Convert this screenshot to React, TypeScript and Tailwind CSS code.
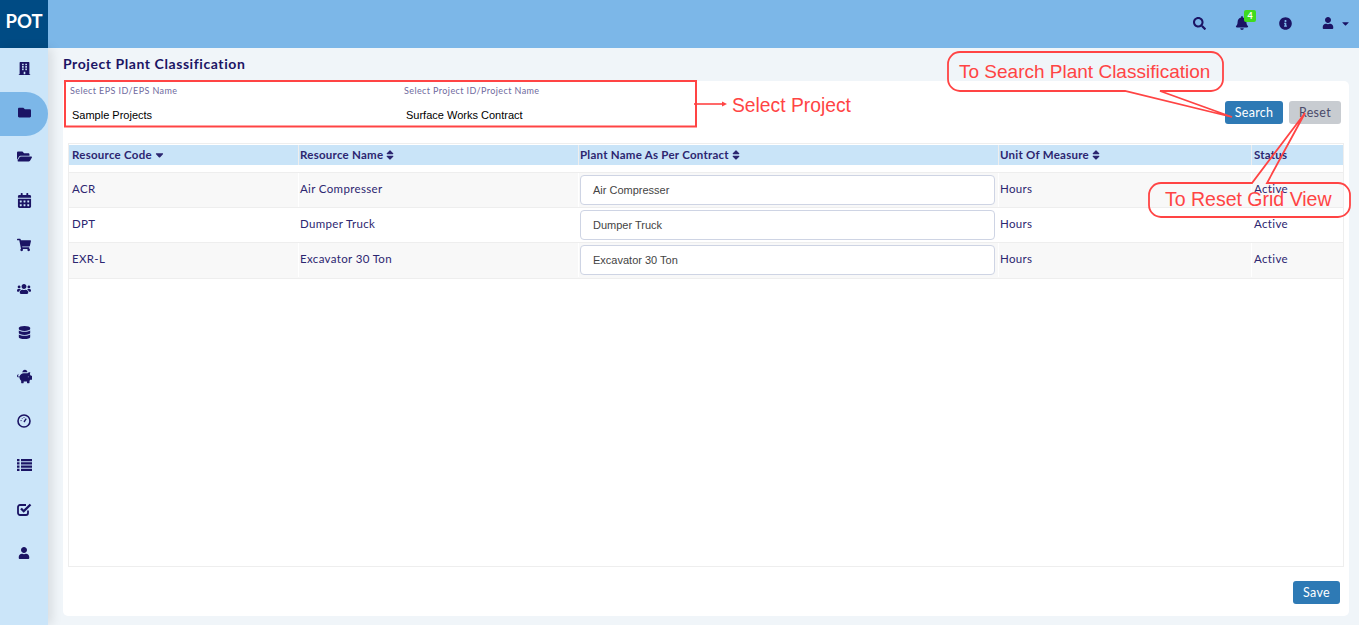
import {
  FaBell,
  FaBuilding,
  FaCalendarAlt,
  FaCaretDown,
  FaDatabase,
  FaFolder,
  FaFolderOpen,
  FaInfoCircle,
  FaPiggyBank,
  FaSearch,
  FaShoppingCart,
  FaSort,
  FaSortDown,
  FaUser,
  FaUsers,
} from "react-icons/fa";
import type { ComponentType } from "react";

const NAVY = "text-[#1b1464]";

type IconProps = { size?: number };

function GaugeIcon() {
  return (
    <svg width="14" height="14" viewBox="0 0 14 14" fill="none" stroke="currentColor">
      <circle cx="7" cy="7" r="6" strokeWidth="1.6" />
      <path d="M7 8 9.2 4.6" strokeWidth="1.4" />
      <path d="M3.6 6.6h1M5 4.2l.5.6M7 3.2v.8" strokeWidth="1" />
    </svg>
  );
}

function ListIcon() {
  return (
    <svg width="15" height="12" viewBox="0 0 15 12" fill="currentColor">
      <path d="M0 0h2.5v2.2H0zM4 0h11v2.2H4zM0 3.3h2.5v2.2H0zM4 3.3h11v2.2H4zM0 6.6h2.5v2.2H0zM4 6.6h11v2.2H4zM0 9.8h2.5V12H0zM4 9.8h11V12H4z" />
    </svg>
  );
}

function CheckSquareIcon() {
  return (
    <svg width="15" height="14" viewBox="0 0 15 14" fill="none" stroke="currentColor">
      <path d="M11 8.5V11a2 2 0 0 1-2 2H3a2 2 0 0 1-2-2V5a2 2 0 0 1 2-2h6" strokeWidth="1.8" />
      <path d="M4 6.5 6.7 9.2 13.5 2.5" strokeWidth="2.3" />
    </svg>
  );
}

const navItems: { icon: ComponentType<IconProps>; size: number; active?: boolean }[] = [
  { icon: FaBuilding, size: 13 },
  { icon: FaFolder, size: 13, active: true },
  { icon: FaFolderOpen, size: 15 },
  { icon: FaCalendarAlt, size: 15 },
  { icon: FaShoppingCart, size: 14 },
  { icon: FaUsers, size: 14 },
  { icon: FaDatabase, size: 13 },
  { icon: FaPiggyBank, size: 15 },
  { icon: GaugeIcon, size: 14 },
  { icon: ListIcon, size: 14 },
  { icon: CheckSquareIcon, size: 15 },
  { icon: FaUser, size: 12 },
];

const rows = [
  { code: "ACR", name: "Air Compresser", bg: "bg-[#f8f8f8]", h: "h-[35px]" },
  { code: "DPT", name: "Dumper Truck", bg: "bg-white", h: "h-[35px]" },
  { code: "EXR-L", name: "Excavator 30 Ton", bg: "bg-[#f8f8f8]", h: "h-[36px] pb-[1px]" },
];

function Sidebar() {
  return (
    <aside className="w-[48px] shrink-0 bg-[#cbe5f9] shadow-[4px_0_10px_rgba(0,0,0,0.1)] z-10">
      {navItems.map(({ icon: Icon, size, active }, i) => (
        <div
          key={i}
          className={`h-[44px] pb-[3px] flex items-center justify-center ${NAVY} ${
            active ? "bg-[#7cb7e8] rounded-r-[22px]" : ""
          }`}
        >
          <Icon size={size} />
        </div>
      ))}
    </aside>
  );
}

function Header() {
  return (
    <header className="h-[48px] flex items-center bg-[#7cb7e8]">
      <div className="w-[48px] h-full pb-[4px] bg-[#004b84] flex items-center justify-center text-white font-bold text-[18.5px] font-['Lato',sans-serif]">
        POT
      </div>
      <div className={`ml-auto pb-[2px] flex items-center ${NAVY}`}>
        <FaSearch size={13} className="mr-[29px]" />
        <div className="relative mr-[30px]">
          <FaBell size={14} />
          <span className="absolute -top-[6px] left-[9px] w-[12px] h-[12px] rounded-[2px] bg-[#3fdc1e] text-white text-[9px] leading-[12px] font-bold text-center">
            4
          </span>
        </div>
        <FaInfoCircle size={13} className="mr-[30px]" />
        <FaUser size={12} className="mr-[6px]" />
        <FaCaretDown size={11} className="mr-[8px]" />
      </div>
    </header>
  );
}

function SortLabel({ label, down }: { label: string; down?: boolean }) {
  return (
    <span className="flex items-center gap-[1px]">
      {label}
      {down ? <FaSortDown size={13} className="-mt-[5px]" /> : <FaSort size={12} />}
    </span>
  );
}

function PlantTable() {
  return (
    <div className="mt-[15px] mx-[5px] h-[424px] border border-[#eeeeee] text-[11.5px] text-[#2c2670]">
      <div className="mt-[1px] h-[20px] flex gap-[1px] font-bold tracking-[0.25px] bg-[#eeeeee]">
        <div className="w-[229px] bg-[#c9e4f8] flex items-center pl-[3px]"><SortLabel label="Resource Code" down /></div>
        <div className="w-[279px] bg-[#c9e4f8] flex items-center pl-[1px]"><SortLabel label="Resource Name" /></div>
        <div className="w-[419px] bg-[#c9e4f8] flex items-center pl-[1px]"><SortLabel label="Plant Name As Per Contract" /></div>
        <div className="w-[252px] bg-[#c9e4f8] flex items-center pl-[1px]"><SortLabel label="Unit Of Measure" /></div>
        <div className="w-[91px] bg-[#c9e4f8] flex items-center pl-[2px]">Status</div>
      </div>
      <div className="mt-[7px] border-t border-[#eeeeee] tracking-[0.35px]">
        {rows.map((row) => (
          <div key={row.code} className={`flex border-b border-[#eeeeee] ${row.bg} ${row.h}`}>
            <div className="w-[230px] pl-[3px] pb-[2px] flex items-center border-r border-white">{row.code}</div>
            <div className="w-[280px] pl-[1px] pb-[2px] flex items-center border-r border-white">{row.name}</div>
            <div className="w-[420px] pl-[1px] flex items-center border-r border-white">
              <div className="w-[415px] h-[30px] flex items-center pl-[12px] pt-[1px] bg-white border border-[#ced4e4] rounded-[4px] text-[#444444] tracking-normal font-['Liberation_Sans',sans-serif] text-[11px]">
                {row.name}
              </div>
            </div>
            <div className="w-[253px] pl-[1px] pb-[2px] flex items-center border-r border-white">Hours</div>
            <div className="pl-[2px] pb-[2px] flex items-center">Active</div>
          </div>
        ))}
      </div>
    </div>
  );
}

function Annotations() {
  return (
    <div className="absolute inset-0 pointer-events-none text-[#ff4444] font-['Liberation_Sans',sans-serif]">
      <svg width="1359" height="625" className="absolute inset-0" fill="none" stroke="#ff4444">
        <rect x="65" y="81" width="631" height="45.5" strokeWidth="2" />
        <path d="M694 104h28" strokeWidth="1.6" />
        <path d="M722 101.5l5 2.5-5 2.5z" fill="#ff4444" stroke="none" />
        <path
          d="M960 52h251a12 12 0 0 1 12 12v15a12 12 0 0 1-12 12h-51l72 26-107-26H960a12 12 0 0 1-12-12V64a12 12 0 0 1 12-12z"
          strokeWidth="1.8"
        />
        <path
          d="M1161 183h91l53-70-38 70h71a12 12 0 0 1 12 12v10a12 12 0 0 1-12 12h-177a12 12 0 0 1-12-12v-10a12 12 0 0 1 12-12z"
          strokeWidth="1.8"
        />
      </svg>
      <span className="absolute left-[732px] top-[94px] text-[19.3px] leading-[23px]">Select Project</span>
      <span className="absolute left-[959px] top-[60px] text-[19px] leading-[23px]">To Search Plant Classification</span>
      <span className="absolute left-[1165px] top-[188px] text-[19.5px] leading-[23px]">To Reset Grid View</span>
    </div>
  );
}

export default function App() {
  return (
    <div className="relative w-[1359px] h-[625px] overflow-hidden flex flex-col bg-[#f0f5f9] font-['Lato',sans-serif]">
      <Header />
      <div className="flex flex-1 min-h-0">
        <Sidebar />
        <main className="flex-1 min-w-0 pl-[15px] pr-[10px] pt-[7px]">
          <h1 className={`text-[14px] leading-[17px] font-bold tracking-[0.57px] ${NAVY}`}>Project Plant Classification</h1>
          <section className="mt-[9px] h-[535px] bg-white rounded-[5px] flex flex-col">
            <div className="h-[47px] flex">
              <div className="w-[334px] pl-[7px] pt-[4px]">
                <div className="text-[9px] leading-[11px] tracking-[0.4px] text-[#6f6a9e]">Select EPS ID/EPS Name</div>
                <div className="mt-[12px] pl-[2px] text-[11px] leading-[14px] text-black font-['Liberation_Sans',sans-serif]">Sample Projects</div>
              </div>
              <div className="w-[300px] pl-[7px] pt-[4px]">
                <div className="text-[9px] leading-[11px] tracking-[0.4px] text-[#6f6a9e]">Select Project ID/Project Name</div>
                <div className="mt-[12px] pl-[2px] text-[11px] leading-[14px] text-black font-['Liberation_Sans',sans-serif]">Surface Works Contract</div>
              </div>
              <div className="ml-auto mt-[20px] mr-[8px] flex gap-[6px] text-[12.5px] tracking-[0.3px]">
                <button className="w-[58px] h-[23px] pt-[1px] rounded-[3px] bg-[#2e7ab5] text-white">Search</button>
                <button className="w-[52px] h-[23px] pt-[1px] rounded-[3px] bg-[#c8ccd1] text-[#4a4a6a]">Reset</button>
              </div>
            </div>
            <PlantTable />
            <div className="mt-[14px] mr-[9px] flex justify-end">
              <button className="w-[47px] h-[23px] pt-[1px] rounded-[3px] bg-[#2e7ab5] text-white text-[12.5px] tracking-[0.3px]">Save</button>
            </div>
          </section>
        </main>
      </div>
      <Annotations />
    </div>
  );
}
